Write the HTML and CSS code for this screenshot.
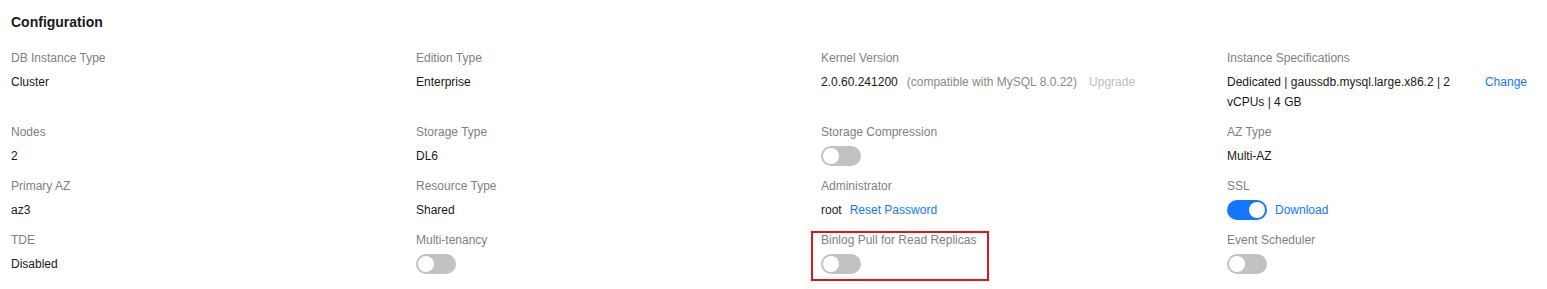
FILE: index.html
```html
<!DOCTYPE html>
<html lang="en">
<head>
    <meta charset="UTF-8">
    <meta name="viewport" content="width=device-width, initial-scale=1.0">
    <title>Configuration</title>
    <link rel="stylesheet" href="styles.css">
</head>
<body>

<div class="section">
    <div class="section-title">Configuration</div>
    <div class="info-grid">
        <div class="item">
            <div class="label">DB Instance Type</div>
            <div class="value">Cluster</div>
        </div>
        <div class="item">
            <div class="label">Edition Type</div>
            <div class="value">Enterprise</div>
        </div>
        <div class="item">
            <div class="label">Kernel Version</div>
            <div class="value">2.0.60.241200<span class="muted">(compatible with MySQL 8.0.22)</span><span class="disabled-link">Upgrade</span></div>
        </div>
        <div class="item">
            <div class="label">Instance Specifications</div>
            <div class="value spec">
                <span class="spec-text">Dedicated | gaussdb.mysql.large.x86.2 | 2 vCPUs | 4 GB</span>
                <a class="link">Change</a>
            </div>
        </div>

        <div class="item">
            <div class="label">Nodes</div>
            <div class="value">2</div>
        </div>
        <div class="item">
            <div class="label">Storage Type</div>
            <div class="value">DL6</div>
        </div>
        <div class="item">
            <div class="label">Storage Compression</div>
            <div class="value"><span class="switch"></span></div>
        </div>
        <div class="item">
            <div class="label">AZ Type</div>
            <div class="value">Multi-AZ</div>
        </div>

        <div class="item">
            <div class="label">Primary AZ</div>
            <div class="value">az3</div>
        </div>
        <div class="item">
            <div class="label">Resource Type</div>
            <div class="value">Shared</div>
        </div>
        <div class="item">
            <div class="label">Administrator</div>
            <div class="value">root<a class="link spaced">Reset Password</a></div>
        </div>
        <div class="item">
            <div class="label">SSL</div>
            <div class="value"><span class="switch on"></span><a class="link spaced">Download</a></div>
        </div>

        <div class="item">
            <div class="label">TDE</div>
            <div class="value">Disabled</div>
        </div>
        <div class="item">
            <div class="label">Multi-tenancy</div>
            <div class="value"><span class="switch"></span></div>
        </div>
        <div class="item highlighted">
            <div class="label">Binlog Pull for Read Replicas</div>
            <div class="value"><span class="switch"></span></div>
        </div>
        <div class="item">
            <div class="label">Event Scheduler</div>
            <div class="value"><span class="switch"></span></div>
        </div>
    </div>
</div>

</body>
</html>
```

FILE: styles.css
```css
* {
    box-sizing: border-box;
}

body {
    margin: 0;
    background-color: #fff;
    font-family: "Liberation Sans", Arial, sans-serif;
    font-size: 12px;
    color: #191919;
}

.section {
    padding: 12px 20px 0 11px;
}

.section-title {
    font-size: 14px;
    font-weight: bold;
    line-height: 20px;
    margin-bottom: 16px;
}

.info-grid {
    display: grid;
    grid-template-columns: 405px 405px 406px 1fr;
}

.item {
    margin-bottom: 10px;
}

.label {
    line-height: 20px;
    color: #7f7f7f;
}

.value {
    display: flex;
    align-items: center;
    min-height: 20px;
    line-height: 20px;
    margin-top: 4px;
}

.muted {
    color: #8a8a8a;
    margin-left: 9px;
}

.disabled-link {
    color: #bdbdbd;
    margin-left: 12px;
}

.spec {
    justify-content: space-between;
    align-items: flex-start;
}

.spec-text {
    max-width: 240px;
}

.link {
    color: #1476ff;
    cursor: pointer;
}

.link.spaced {
    margin-left: 8px;
}

.switch {
    position: relative;
    display: inline-block;
    width: 40px;
    height: 20px;
    border-radius: 10px;
    background-color: #c2c2c2;
}

.switch::after {
    content: "";
    position: absolute;
    top: 2px;
    left: 2px;
    width: 16px;
    height: 16px;
    border-radius: 50%;
    background-color: #fff;
}

.switch.on {
    background-color: #1476ff;
}

.switch.on::after {
    left: 22px;
}

.highlighted {
    position: relative;
}

/* red marker drawn over the item */
.highlighted::before {
    content: "";
    position: absolute;
    left: -10px;
    top: 1px;
    width: 174px;
    height: 46px;
    border: 2px solid #e8141b;
}
```
